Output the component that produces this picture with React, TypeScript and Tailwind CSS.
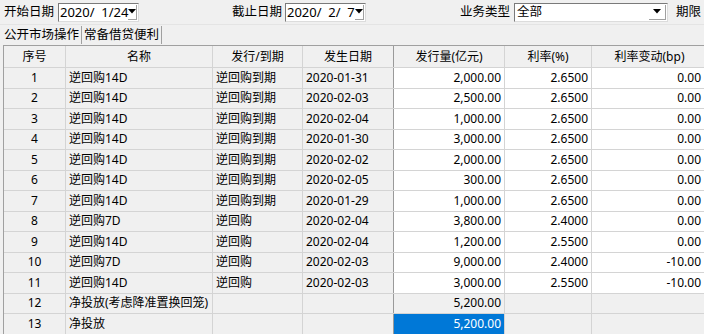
import React from "react";

type Row = {
  no: string;
  name: string;
  kind: string;
  date: string;
  amt: string;
  rate: string;
  chg: string;
};

const rows: Row[] = [
  { no: "1", name: "逆回购14D", kind: "逆回购到期", date: "2020-01-31", amt: "2,000.00", rate: "2.6500", chg: "0.00" },
  { no: "2", name: "逆回购14D", kind: "逆回购到期", date: "2020-02-03", amt: "2,500.00", rate: "2.6500", chg: "0.00" },
  { no: "3", name: "逆回购14D", kind: "逆回购到期", date: "2020-02-04", amt: "1,000.00", rate: "2.6500", chg: "0.00" },
  { no: "4", name: "逆回购14D", kind: "逆回购到期", date: "2020-01-30", amt: "3,000.00", rate: "2.6500", chg: "0.00" },
  { no: "5", name: "逆回购14D", kind: "逆回购到期", date: "2020-02-02", amt: "2,000.00", rate: "2.6500", chg: "0.00" },
  { no: "6", name: "逆回购14D", kind: "逆回购到期", date: "2020-02-05", amt: "300.00", rate: "2.6500", chg: "0.00" },
  { no: "7", name: "逆回购14D", kind: "逆回购到期", date: "2020-01-29", amt: "1,000.00", rate: "2.6500", chg: "0.00" },
  { no: "8", name: "逆回购7D", kind: "逆回购", date: "2020-02-04", amt: "3,800.00", rate: "2.4000", chg: "0.00" },
  { no: "9", name: "逆回购14D", kind: "逆回购", date: "2020-02-04", amt: "1,200.00", rate: "2.5500", chg: "0.00" },
  { no: "10", name: "逆回购7D", kind: "逆回购", date: "2020-02-03", amt: "9,000.00", rate: "2.4000", chg: "-10.00" },
  { no: "11", name: "逆回购14D", kind: "逆回购", date: "2020-02-03", amt: "3,000.00", rate: "2.5500", chg: "-10.00" },
  { no: "12", name: "净投放(考虑降准置换回笼)", kind: "", date: "", amt: "5,200.00", rate: "", chg: "" },
  { no: "13", name: "净投放", kind: "", date: "", amt: "5,200.00", rate: "", chg: "" },
];

const font = { fontFamily: '"Noto Sans", "Noto Sans CJK SC", sans-serif' };

function Arrow() {
  return (
    <svg width="8" height="5" viewBox="0 0 8 5">
      <polygon points="0,0 8,0 4,4.5" fill="#000" />
    </svg>
  );
}

function DateBox({ text }: { text: string }) {
  return (
    <div className="flex shrink-0 items-center h-[19px] w-[81px] bg-white border border-[#7a7a7a] border-r-[#dcdcdc] border-b-[#dcdcdc]">
      <span className="flex-1 pl-[1px] whitespace-pre text-[13px] leading-none text-black">{text}</span>
      <div className="flex items-center justify-center w-[15px] h-[15px] mr-[1px] border-r border-b border-[#a0a0a0]">
        <Arrow />
      </div>
    </div>
  );
}

export default function App() {
  const grid = "grid grid-cols-[62px_147px_90px_91px_111px_87px_116px]";
  return (
    <div className="w-[704px] h-[334px] overflow-hidden bg-[#f0f0f0] text-black" style={font}>
      {/* top bar */}
      <div className="flex items-center h-[24px] pl-[4px] text-[12.5px] whitespace-nowrap">
        <span className="shrink-0 w-[51px]">开始日期</span>
        <div className="ml-[3px] shrink-0">
          <DateBox text="2020/  1/24" />
        </div>
        <span className="ml-[93px] shrink-0 w-[51px]">截止日期</span>
        <div className="ml-[2px] shrink-0">
          <DateBox text="2020/  2/  7" />
        </div>
        <span className="ml-[94px] shrink-0 w-[51px]">业务类型</span>
        <div className="ml-[3px] shrink-0 flex items-center h-[19px] w-[154px] bg-white border border-[#7a7a7a] border-r-[#dcdcdc] border-b-[#dcdcdc]">
          <span className="flex-1 pl-[2px] text-[12.5px] leading-none">全部</span>
          <div className="flex items-center justify-center w-[17px] h-[15px] mr-[1px] border-r border-b border-[#a0a0a0]">
            <Arrow />
          </div>
        </div>
        <span className="ml-[8px] shrink-0">期限</span>
      </div>

      {/* tabs */}
      <div className="flex items-center h-[21px] pl-[4px] text-[12.5px] whitespace-nowrap border-t border-[#e4e4e4]">
        <span className="pr-[2px] border-r border-[#a0a0a0] leading-[18px]">公开市场操作</span>
        <span className="pl-[2px] pr-[2px] border-r border-[#a0a0a0] leading-[18px]">常备借贷便利</span>
      </div>

      {/* table */}
      <div className="ml-[3px] border-l border-t border-[#a0a0a0] text-[12px] whitespace-nowrap">
        <div className={`${grid} h-[22px] border-b border-[#d4d4d4]`}>
          {["序号", "名称", "发行/到期", "发生日期", "发行量(亿元)", "利率(%)", "利率变动(bp)"].map((h, i) => (
            <div
              key={h}
              className={`flex items-center justify-center border-r ${i === 3 ? "border-[#9a9a9a]" : "border-[#d4d4d4]"}`}
            >
              {h}
            </div>
          ))}
        </div>
        {rows.map((r, idx) => {
          const editable = idx < 11;
          const white = editable ? "bg-white" : "";
          const amtCls = idx === 12 ? "bg-[#0078d7] text-white" : white;
          return (
            <div key={r.no} className={`${grid} h-[20.5px] border-b border-[#d4d4d4]`}>
              <div className="flex items-center justify-center border-r border-[#d4d4d4]">{r.no}</div>
              <div className="flex items-center pl-[3px] border-r border-[#d4d4d4] overflow-hidden">{r.name}</div>
              <div className="flex items-center pl-[3px] border-r border-[#d4d4d4]">{r.kind}</div>
              <div className="flex items-center pl-[3px] border-r border-[#9a9a9a]">{r.date}</div>
              <div className={`flex items-center justify-end pr-[3px] border-r border-[#d4d4d4] ${amtCls}`}>{r.amt}</div>
              <div className={`flex items-center justify-end pr-[3px] border-r border-[#d4d4d4] ${white}`}>{r.rate}</div>
              <div className={`flex items-center justify-end pr-[6px] border-r border-[#d4d4d4] ${white}`}>{r.chg}</div>
            </div>
          );
        })}
      </div>
    </div>
  );
}
